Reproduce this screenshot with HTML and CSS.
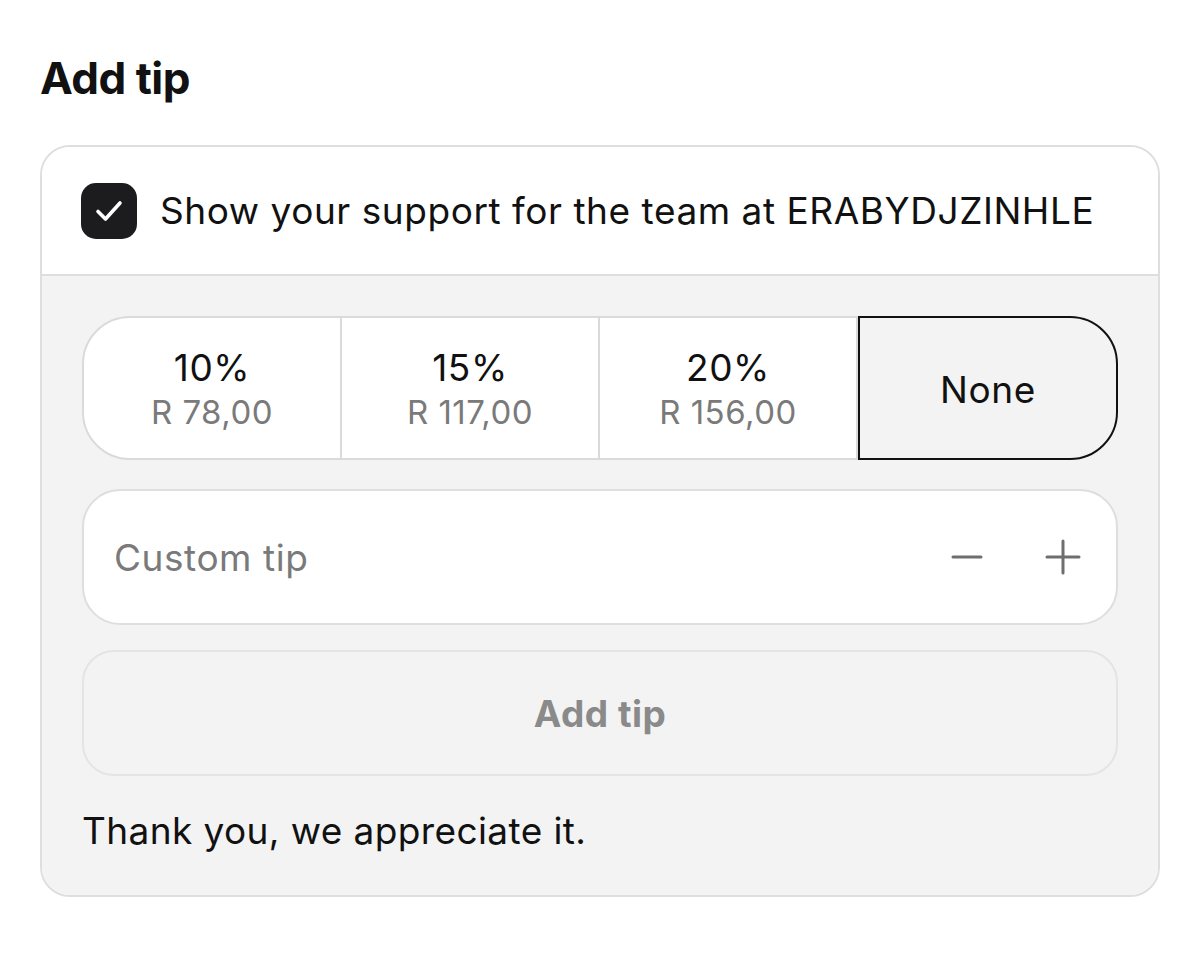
FILE: index.html
```html
<!DOCTYPE html>
<html lang="en">
<head>
    <meta charset="UTF-8">
    <meta name="viewport" content="width=device-width, initial-scale=1.0">
    <title>Add tip</title>
    <link rel="stylesheet" href="styles.css">
</head>
<body>
    <div class="page">
        <h1 class="title">Add tip</h1>

        <div class="tip_card">
            <label class="support_row">
                <span class="check_box">
                    <svg width="30" height="24" viewBox="0 0 30 24" fill="none">
                        <path d="M4 12.5l7.5 7.5L26 4" stroke="#fff" stroke-width="3.6" stroke-linecap="round" stroke-linejoin="round"/>
                    </svg>
                </span>
                <span class="support_text">Show your support for the team at ERABYDJZINHLE</span>
            </label>

            <div class="tip_body">
                <ul class="tip_options">
                    <li class="tip_option">
                        <span class="pct">10%</span>
                        <span class="amount">R 78,00</span>
                    </li>
                    <li class="tip_option">
                        <span class="pct">15%</span>
                        <span class="amount">R 117,00</span>
                    </li>
                    <li class="tip_option">
                        <span class="pct">20%</span>
                        <span class="amount">R 156,00</span>
                    </li>
                    <li class="tip_option selected">
                        <span class="pct">None</span>
                    </li>
                </ul>

                <div class="custom_tip">
                    <span class="placeholder">Custom tip</span>
                    <div class="steppers">
                        <svg width="34" height="34" viewBox="0 0 34 34">
                            <path d="M3 17h28" stroke="#6e6e6e" stroke-width="3" stroke-linecap="round"/>
                        </svg>
                        <svg width="38" height="38" viewBox="0 0 38 38">
                            <path d="M3 19h32M19 3v32" stroke="#6e6e6e" stroke-width="3" stroke-linecap="round"/>
                        </svg>
                    </div>
                </div>

                <button class="add_btn" type="button">Add tip</button>

                <p class="thanks">Thank you, we appreciate it.</p>
            </div>
        </div>
    </div>
</body>
</html>
```

FILE: styles.css
```css
* {
    margin: 0;
    padding: 0;
    box-sizing: border-box;
}

li {
    list-style: none;
}

body {
    background: #fff;
    font-family: Inter, "Liberation Sans", Arial, sans-serif;
    color: #111;
}

.page {
    padding: 50px 40px 0 40px;
    width: 1200px;
}

.title {
    font-size: 44px;
    font-weight: 700;
    line-height: 56px;
    letter-spacing: -0.5px;
    margin-bottom: 39px;
}

.tip_card {
    width: 1120px;
    border: 2px solid #dedede;
    border-radius: 30px;
    overflow: hidden;
}

.support_row {
    display: flex;
    align-items: center;
    height: 129px;
    padding-left: 39px;
    background: #fff;
    border-bottom: 2px solid #dedede;
}

.check_box {
    width: 56px;
    height: 56px;
    border-radius: 15px;
    background: #1c1c1e;
    display: flex;
    align-items: center;
    justify-content: center;
    margin-right: 23px;
}

.support_text {
    font-size: 37px;
    letter-spacing: 0.55px;
}

.tip_body {
    background: #f3f3f3;
    padding: 40px 40px 0 40px;
    height: 619px;
}

.tip_options {
    display: flex;
    height: 144px;
}

.tip_option {
    flex: 1;
    display: flex;
    flex-direction: column;
    align-items: center;
    justify-content: center;
    padding-top: 4px;
    background: #fff;
    border: 2px solid #dadada;
    border-left: none;
}

.tip_option:first-child {
    border-left: 2px solid #dadada;
    border-radius: 48px 0 0 48px;
}

.tip_option.selected {
    background: #f3f3f3;
    border: 2px solid #111;
    border-radius: 0 48px 48px 0;
}

.pct {
    font-size: 37px;
    line-height: 44px;
    letter-spacing: 0.6px;
    color: #111;
}

.amount {
    font-size: 33px;
    line-height: 44px;
    letter-spacing: 0.5px;
    color: #7a7a7a;
}

.custom_tip {
    margin-top: 29px;
    height: 136px;
    background: #fff;
    border: 2px solid #dedede;
    border-radius: 38px;
    display: flex;
    align-items: center;
    justify-content: space-between;
    padding: 0 34px 0 30px;
}

.placeholder {
    font-size: 37px;
    letter-spacing: 0.55px;
    color: #7a7a7a;
}

.steppers {
    display: flex;
    align-items: center;
    gap: 60px;
}

.add_btn {
    display: block;
    width: 100%;
    margin-top: 25px;
    height: 126px;
    background: #f3f3f3;
    border: 2px solid #e4e4e4;
    border-radius: 32px;
    font-family: inherit;
    font-size: 37px;
    font-weight: 700;
    letter-spacing: 0.5px;
    color: #8a8a8a;
}

.thanks {
    margin-top: 30px;
    font-size: 37px;
    line-height: 50px;
    letter-spacing: 0.4px;
    color: #111;
}
```
